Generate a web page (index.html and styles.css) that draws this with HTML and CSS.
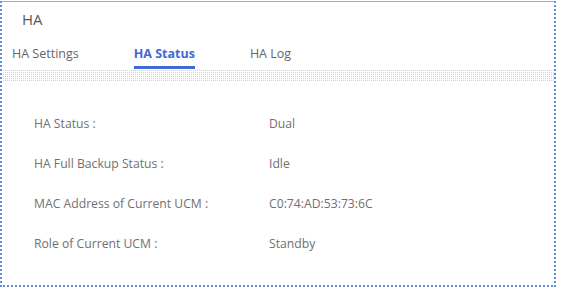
FILE: index.html
```html
<!DOCTYPE html>
<html lang="en">

<head>
    <meta charset="utf-8">
    <title>HA</title>
    <link rel="stylesheet" href="styles.css">
</head>

<body>

    <div class="panel">
        <div class="panel-title">HA</div>

        <div class="tabs">
            <div class="tab">HA Settings</div>
            <div class="tab active">HA Status</div>
            <div class="tab">HA Log</div>
        </div>

        <div class="band"></div>

        <div class="info">
            <div class="row">
                <span class="label">HA Status :</span>
                <span class="value">Dual</span>
            </div>
            <div class="row">
                <span class="label">HA Full Backup Status :</span>
                <span class="value">Idle</span>
            </div>
            <div class="row">
                <span class="label">MAC Address of Current UCM :</span>
                <span class="value">C0:74:AD:53:73:6C</span>
            </div>
            <div class="row">
                <span class="label">Role of Current UCM :</span>
                <span class="value">Standby</span>
            </div>
        </div>
    </div>

</body>

</html>
```

FILE: styles.css
```css
body {
    font-family: "Open Sans", Arial, sans-serif;
    margin: 0;
    padding: 0;
    background-color: #fff;
    color: #707070;
}

.panel {
    box-sizing: border-box;
    width: 556px;
    height: 286px;
    margin-top: 1px;
    border-top: 1px solid #8fb0e0;
    border-left: 2px dotted #5b8fd8;
    border-right: 2px dotted #5b8fd8;
    border-bottom: 2px dotted #5b8fd8;
}

.panel-title {
    padding: 6px 0 0 20px;
    font-size: 15px;
    line-height: 22px;
    color: #5a5a5a;
}

.tabs {
    display: flex;
    gap: 55px;
    padding-left: 10px;
    margin-top: 15px;
}

.tab {
    font-size: 12.5px;
    line-height: 18px;
    padding-bottom: 3px;
    border-bottom: 3px solid transparent;
    color: #666;
}

.tab.active {
    color: #3d6ad6;
    font-weight: bold;
    border-bottom-color: #3d6ad6;
}

.band {
    height: 12px;
    background-image: linear-gradient(90deg, #fff 1px, transparent 1px), linear-gradient(#fff 1px, #cfcfcf 1px);
    background-size: 2px 2px;
}

.info {
    padding: 22px 0 0 32px;
}

.row {
    display: flex;
    align-items: center;
    height: 40px;
    font-size: 12.2px;
}

.label {
    width: 235px;
}
```
